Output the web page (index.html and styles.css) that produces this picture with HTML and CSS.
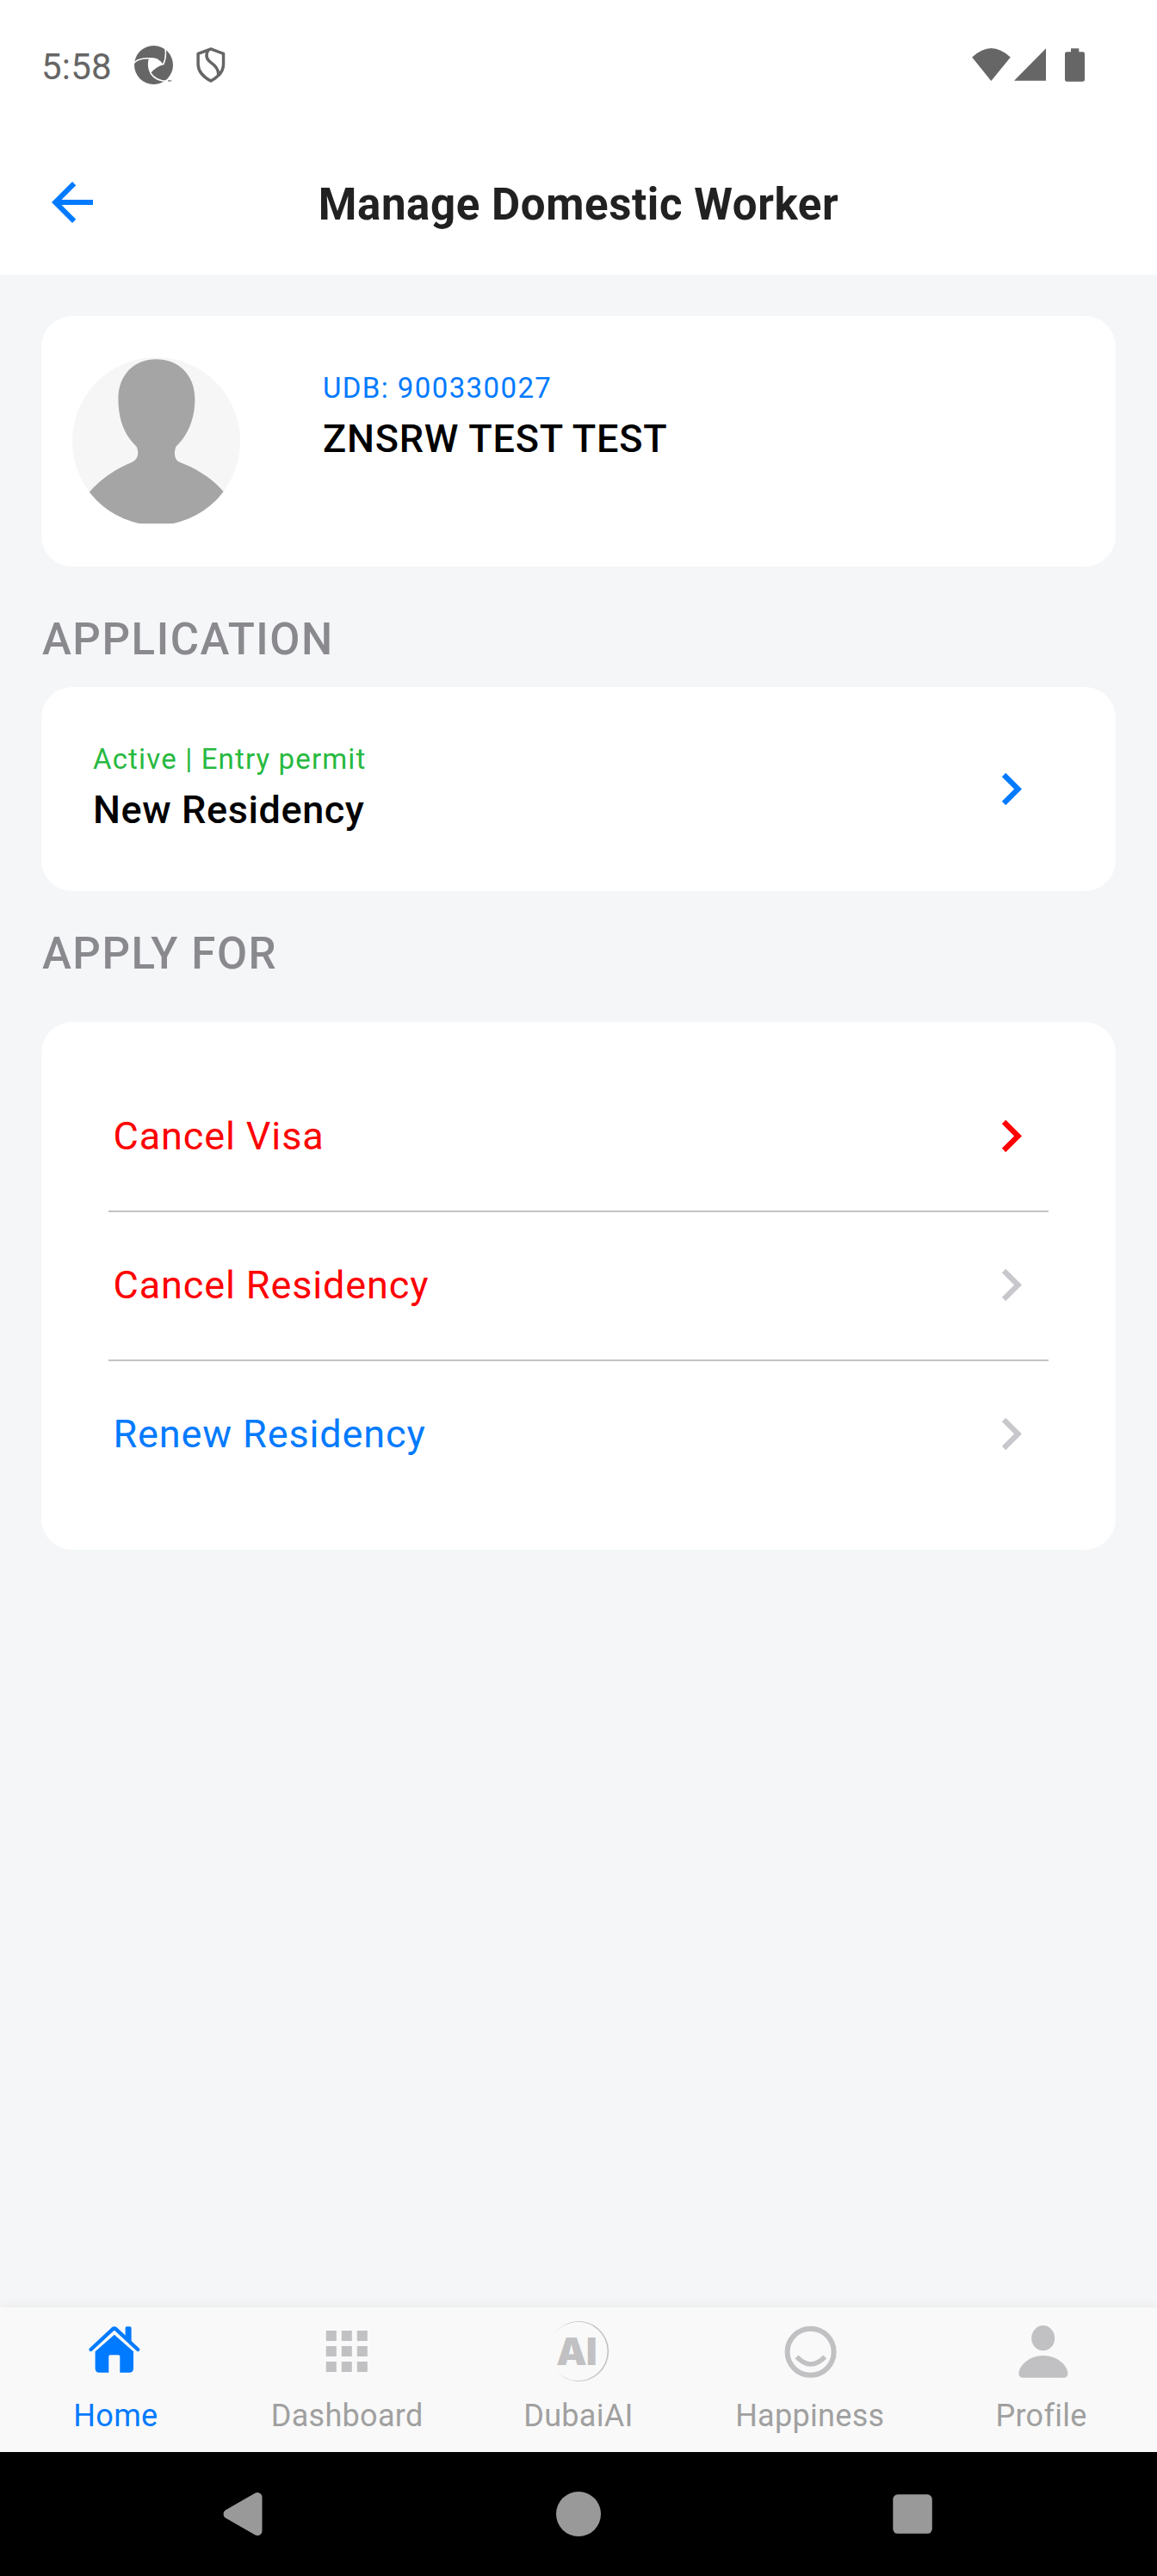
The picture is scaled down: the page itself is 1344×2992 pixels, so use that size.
FILE: index.html
```
<!DOCTYPE html>
<html lang="en">
<head>
<meta charset="utf-8">
<title>Manage Domestic Worker</title>
<link rel="stylesheet" href="styles.css">
</head>
<body>
<div class="screen">
  <div class="status-bar">
    <span class="clock">5:58</span>
    <svg class="notif-aperture" viewBox="348 9 135 135">
      <circle cx="415.5" cy="76.5" r="67.5" fill="#666"/>
      <path d="M402 52Q418 50 430 57Q443 63 448 76Q422 84 405 105Q392 78 402 52Z" fill="#fff"/>
      <path d="M346 70Q368 46 429 57M402 52Q392 78 405 105M448 76Q462 50 455 16M405 105Q424 134 466 133" fill="none" stroke="#fff" stroke-width="4.500"/>
      <path d="M446 146L462 134L476 124L484 122V146Z" fill="#fff"/>
      <path d="M466 129H471V134H466ZM473 129H477V134H473Z" fill="#777"/>
    </svg>
    <svg class="notif-shield" viewBox="565 14 102 124" fill="none" stroke="#666" stroke-width="10.500" stroke-linejoin="round">
      <path d="M616 20L660 36V74Q659 109 616 132Q572 109 571 74V36Z"/>
      <path d="M607 23C594 45 602 58 617 68C634 80 644 92 642 112"/>
    </svg>
    <div class="system-icons">
      <svg class="wifi" viewBox="27 15 135 115"><path d="M27 47Q94-17 162 47L94 130Z" fill="#666"/></svg>
      <svg class="signal" viewBox="174 17 112 113"><path d="M286 17V130H174Z" fill="#666"/></svg>
      <svg class="battery" viewBox="351 18 69 116"><path d="M372 18H400V30H413Q420 30 420 37V127Q420 134 413 134H358Q351 134 351 127V37Q351 30 358 30H372Z" fill="#666"/></svg>
    </div>
  </div>

  <header class="app-bar">
    <svg class="back" viewBox="0 0 24 24"><path d="M20 11H7.83l5.59-5.59L12 4l-8 8 8 8 1.41-1.41L7.83 13H20v-2z" fill="#007aff"/></svg>
    <h1 class="title">Manage Domestic Worker</h1>
  </header>

  <main class="content">
    <section class="card person">
      <svg class="avatar" viewBox="0 0 195 195">
        <clipPath id="round"><circle cx="97.5" cy="97.5" r="97.5"/></clipPath>
        <g clip-path="url(#round)">
          <rect width="195" height="195" fill="#f6f6f6"/>
          <path d="M97.5 2.3C122 2.3 142.4 19 142.4 48.7C142.4 73 133 92 120.5 103.5C118 110 118 118 124 121.5C144 129 162 140 177 157.5V193H19V157.5C34 140 50 130 70 121.5C77 118 77.500 110 74.500 103.500C61 91 53.400 73 53.400 48.700C53.400 19 73 2.300 97.500 2.300Z" fill="#a5a5a5"/>
        </g>
      </svg>
      <div class="details">
        <p class="caption blue wide">UDB: 900330027</p>
        <p class="name">ZNSRW TEST TEST</p>
      </div>
    </section>

    <h2 class="section application">APPLICATION</h2>
    <section class="card residency">
      <div class="details">
        <p class="caption green">Active | Entry permit</p>
        <p class="name">New Residency</p>
      </div>
      <svg class="chevron blue" viewBox="0 0 24 24"><path d="M10 6L8.590 7.410 13.170 12l-4.580 4.590L10 18l6-6z"/></svg>
    </section>

    <h2 class="section apply">APPLY FOR</h2>
    <section class="card actions">
      <div class="action"><span class="red">Cancel Visa</span><svg class="chevron red" viewBox="0 0 24 24"><path d="M10 6L8.590 7.410 13.170 12l-4.580 4.590L10 18l6-6z"/></svg></div>
      <div class="action"><span class="red">Cancel Residency</span><svg class="chevron grey" viewBox="0 0 24 24"><path d="M10 6L8.590 7.410 13.170 12l-4.580 4.590L10 18l6-6z"/></svg></div>
      <div class="action"><span class="blue">Renew Residency</span><svg class="chevron grey" viewBox="0 0 24 24"><path d="M10 6L8.590 7.410 13.170 12l-4.580 4.590L10 18l6-6z"/></svg></div>
    </section>
  </main>

  <nav class="tabs">
    <div class="tab active">
      <svg viewBox="0 0 72 72" fill="#007aff">
        <path d="M7.500 34L32.800 10.300Q34.800 8.700 36.800 10.300L62.200 34" fill="none" stroke="#007aff" stroke-width="4.400" stroke-linecap="round"/>
        <path d="M47.600 18V9Q47.600 7.300 49.300 7.300H53Q54.600 7.300 54.600 9V25Z"/>
        <path d="M34.800 16.700L57 36.300V55.700Q57 60.700 52 60.700H41.300V42Q41.300 40.300 39.600 40.300H30Q28.300 40.300 28.300 42V60.700H17.600Q12.600 60.700 12.600 55.700V36.300Z"/>
      </svg>
      <span>Home</span>
    </div>
    <div class="tab">
      <svg viewBox="0 0 72 72" fill="#c1c1c3"><path d="M11.800 12h12v12h-12zM29.800 12h12v12h-12zM47.800 12h12v12h-12zM11.800 30h12v12h-12zM29.800 30h12v12h-12zM47.800 30h12v12h-12zM11.800 48h12v12h-12zM29.800 48h12v12h-12zM47.800 48h12v12h-12z"/></svg>
      <span>Dashboard</span>
    </div>
    <div class="tab">
      <svg viewBox="0 0 72 72" fill="#c1c1c3">
        <path d="M8 15.500A34.900 34.900 0 1 1 8 56.500A34.200 34.200 0 1 0 8 15.500Z"/>
        <text class="ai-mark" y="51.700"><tspan x="10.300">A</tspan><tspan x="44.700">I</tspan></text>
      </svg>
      <span>DubaiAI</span>
    </div>
    <div class="tab">
      <svg viewBox="0 0 72 72" fill="none" stroke="#c1c1c3"><circle cx="36.600" cy="36.700" r="27" stroke-width="6"/><path d="M20.500 42.300Q36.900 59.700 53.200 42.300" stroke-width="5.600"/></svg>
      <span>Happiness</span>
    </div>
    <div class="tab">
      <svg viewBox="0 0 72 72" fill="#c1c1c3"><ellipse cx="37.700" cy="20.700" rx="13.500" ry="14.600"/><path d="M9.400 62C9.400 53 21 41 37.900 41S66.400 53 66.400 62Q66.400 66.700 61 66.700H15Q9.400 66.700 9.400 62Z"/></svg>
      <span>Profile</span>
    </div>
  </nav>

  <div class="system-nav">
    <svg viewBox="0 0 72 72"><path d="M19 36L53 16.500V55.500Z" fill="#999" stroke="#999" stroke-width="11" stroke-linejoin="round"/></svg>
    <svg viewBox="0 0 72 72"><circle cx="36" cy="36" r="26" fill="#999"/></svg>
    <svg viewBox="0 0 72 72"><rect x="11.300" y="13.300" width="45.500" height="45.500" rx="5.500" fill="#999"/></svg>
  </div>
</div>
</body>
</html>
```
FILE: styles.css
```
* { box-sizing: border-box; }
body { margin: 0; font-family: Roboto, "Liberation Sans", sans-serif; }
h1, h2, p { margin: 0; }
svg { display: block; flex: none; }

.screen { width: 1344px; height: 2992px; display: flex; flex-direction: column; background: #f4f6f8; }

.status-bar { height: 150px; padding: 0 84px 0 48px; display: flex; align-items: center; background: #fff; }
.clock { width: 108px; padding-top: 5px; font-size: 42px; line-height: 48px; letter-spacing: .2px; color: #666; }
.notif-aperture { width: 45px; height: 45px; }
.notif-shield { width: 34px; height: 41px; margin-left: 27px; }
.system-icons { margin-left: auto; display: flex; align-items: center; }
.wifi { width: 45px; height: 38px; }
.signal { width: 37px; height: 38px; margin-left: 4px; }
.battery { width: 23px; height: 39px; margin-left: 22px; }

.app-bar { height: 169px; padding: 0 48px; display: grid; grid-template-columns: 72px 1fr 72px; align-items: center; background: #fff; }
.back { width: 72px; height: 72px; }
.title { padding-top: 6px; text-align: center; font-size: 51px; line-height: 60px; font-weight: 700; letter-spacing: .6px; color: #212121; }

.content { flex: 1; padding: 48px 48px 0; }
.card { background: #fff; border-radius: 36px; display: flex; }
.person { height: 291px; padding: 48px 36px; }
.avatar { width: 195px; height: 195px; }
.person .details { padding: 16px 0 0 96px; }
.person .name { letter-spacing: .8px; }
.details { display: flex; flex-direction: column; gap: 11px; }
.caption { font-size: 33px; line-height: 40px; letter-spacing: 1.15px; }
.name { font-size: 45px; line-height: 56px; font-weight: 500; letter-spacing: .6px; color: #000; }
.wide { letter-spacing: 1.4px; }

.section { padding-left: 1px; font-size: 51px; line-height: 60px; font-weight: 500; letter-spacing: 1.55px; color: #8a8a8e; }
.application { margin: 55px 0 25px; }
.apply { margin: 43px 0 49px; }

.residency { height: 237px; padding: 0 84px 0 60px; align-items: center; justify-content: space-between; }
.residency .details { padding-bottom: 2px; }
.chevron { width: 75px; height: 75px; fill: currentColor; }

.actions { flex-direction: column; padding: 48px 78px; }
.action { height: 173px; padding: 0 6px 2px 5.5px; display: flex; align-items: center; justify-content: space-between; font-size: 45px; line-height: 56px; letter-spacing: .88px; border-bottom: 2px solid #c4c4c4; }
.action:last-child { height: 171px; border-bottom: 0; }

.blue { color: #007aff; }
.green { color: #27b93f; }
.red { color: #f00; }
.grey { color: #c7c7cc; }

.tabs { height: 168px; display: grid; grid-template-columns: repeat(5, 1fr); background: #f9f9f9; box-shadow: 0 0 14px rgba(0, 0, 0, .07); }
.tab { padding-top: 15px; display: flex; flex-direction: column; align-items: center; gap: 17px; font-size: 36px; line-height: 44px; letter-spacing: .3px; color: #a0a0a0; }
.tab svg { width: 72px; height: 72px; }
.active { color: #007aff; }
.ai-mark { font-family: Inter, sans-serif; font-weight: 900; font-size: 44.5px; letter-spacing: 0; }

.system-nav { position: relative; height: 144px; padding: 0 246px; display: flex; align-items: center; justify-content: space-between; background: #000; }
.system-nav svg { width: 72px; height: 72px; }
```
